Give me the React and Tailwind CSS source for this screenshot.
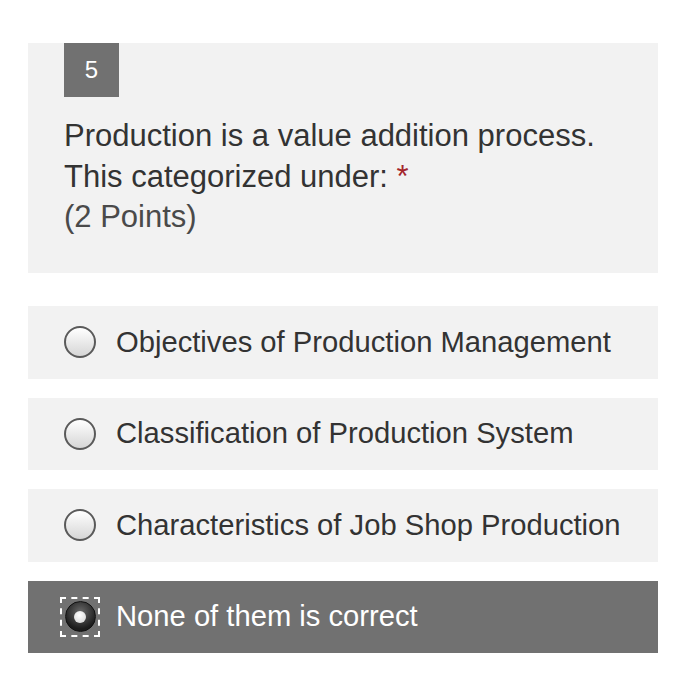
import React from "react";

const OPTIONS = [
  "Objectives of Production Management",
  "Classification of Production System",
  "Characteristics of Job Shop Production",
  "None of them is correct",
];

function Radio({ checked }) {
  if (checked) {
    return (
      <span className="relative flex h-[32px] w-[32px] shrink-0 items-center justify-center">
        <span className="absolute -inset-[4px] border-2 border-dashed border-white" />
        <span className="flex h-[31px] w-[31px] items-center justify-center rounded-full border border-[#111] bg-[radial-gradient(circle_at_50%_35%,#6a6a6a,#1c1c1c_70%)]">
          <span className="h-[12px] w-[12px] rounded-full bg-[radial-gradient(circle_at_45%_35%,#ffffff,#cfcfcf)]" />
        </span>
      </span>
    );
  }
  return (
    <span className="h-[32px] w-[32px] shrink-0 rounded-full border-2 border-[#5a5a5a] bg-gradient-to-b from-[#ffffff] to-[#d6d6d6]" />
  );
}

export default function App() {
  const selected = 3;
  return (
    <div className="min-h-[700px] w-[686px] bg-white pt-[43px] font-['Liberation_Sans',Arial,sans-serif]">
      <div className="mx-[28px] flex flex-col gap-[19px]">
        <div className="mb-[14px] h-[230px] bg-[#f2f2f2] px-[36px]">
          <div className="flex h-[54px] w-[55px] items-center justify-center bg-[#717171] text-[24px] text-white">
            5
          </div>
          <div className="mt-[19px] text-[31px] leading-[40.5px] text-[#333]">
            <div>Production is a value addition process.</div>
            <div>
              This categorized under: <span className="text-[#a4262c]">*</span>
            </div>
            <div className="text-[#4a4a4a]">(2 Points)</div>
          </div>
        </div>
        {OPTIONS.map((opt, i) => {
          const on = i === selected;
          return (
            <div
              key={i}
              className={`flex h-[72.5px] items-center gap-[20px] px-[36px] ${
                on ? "bg-[#717171] text-white" : "bg-[#f2f2f2] text-[#333]"
              }`}
            >
              <Radio checked={on} />
              <span className="text-[29.2px] leading-none">{opt}</span>
            </div>
          );
        })}
      </div>
    </div>
  );
}
